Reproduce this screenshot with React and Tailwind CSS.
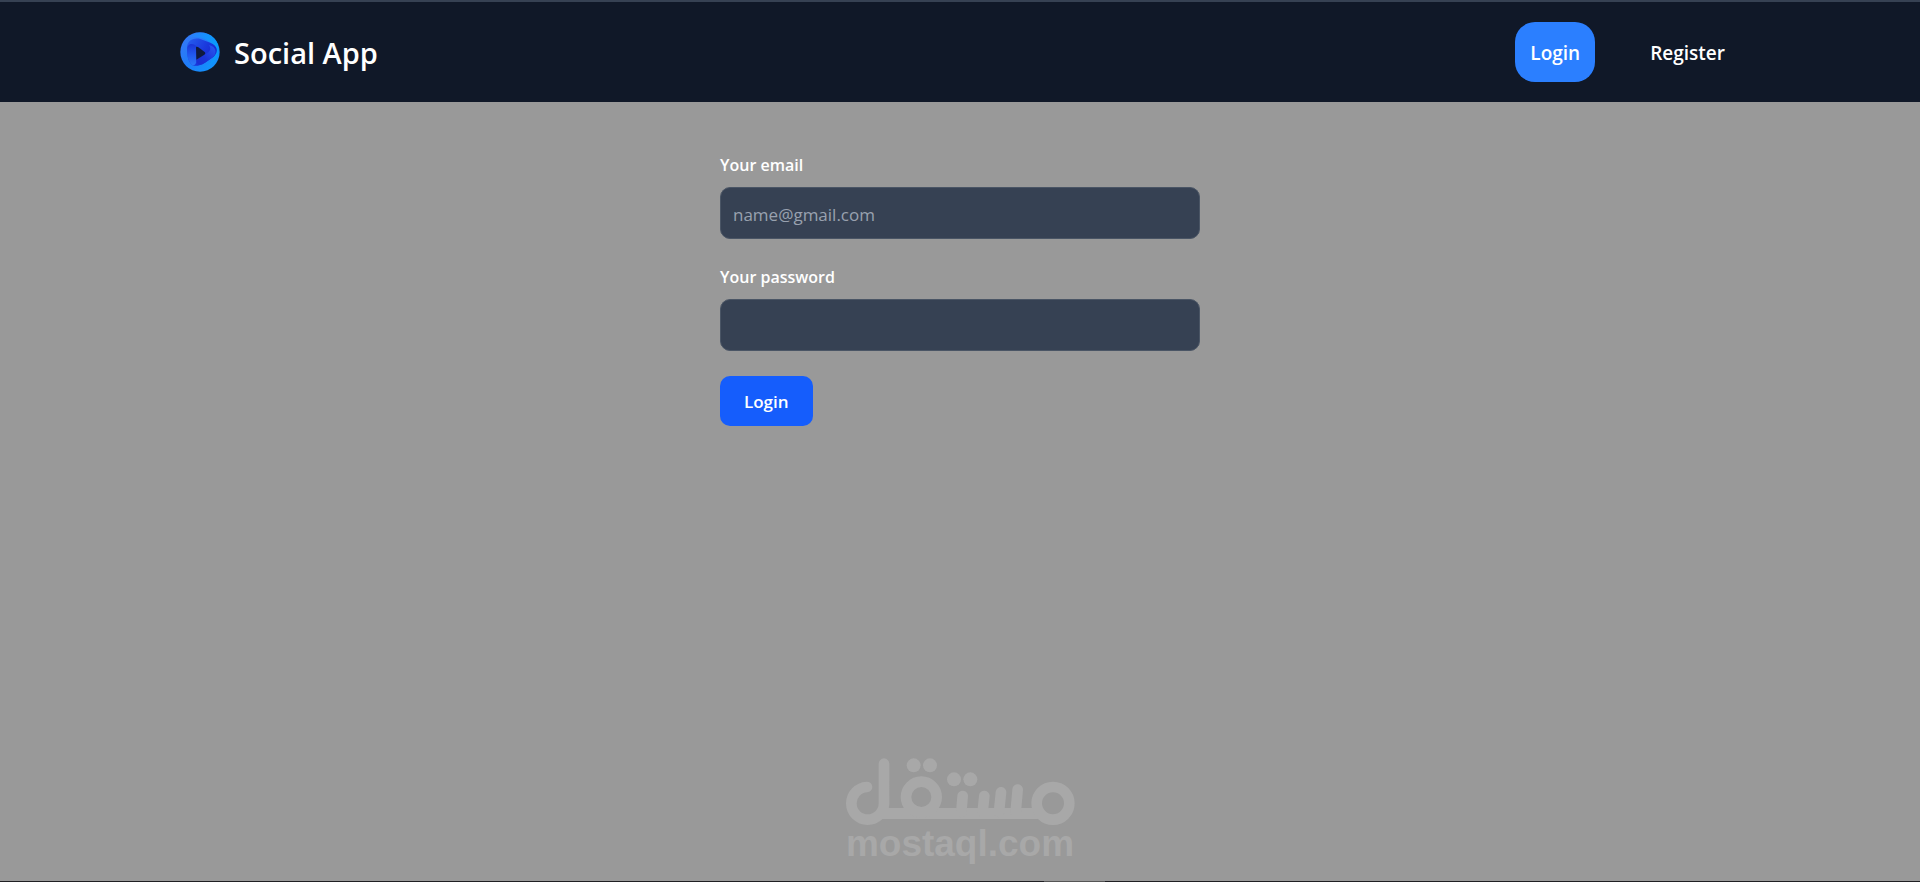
function Logo() {
  return (
    <svg viewBox="13 10 120 120" className="size-10" aria-hidden="true">
      <defs>
        <linearGradient id="ring" x1="0" y1="0" x2="1" y2="1">
          <stop offset="0" stopColor="#3a78f6" />
          <stop offset="0.5" stopColor="#1f7cf8" />
          <stop offset="1" stopColor="#0d9bff" />
        </linearGradient>
        <linearGradient id="rim" x1="0" y1="0" x2="1" y2="0">
          <stop offset="0" stopColor="#2f7cfa" />
          <stop offset="1" stopColor="#069dfb" />
        </linearGradient>
        <linearGradient id="side" x1="0" y1="0" x2="0" y2="1">
          <stop offset="0" stopColor="#1a34d6" />
          <stop offset="0.5" stopColor="#2158ee" />
          <stop offset="1" stopColor="#2a78f8" />
        </linearGradient>
        <linearGradient id="top" x1="0" y1="0" x2="1" y2="0.6">
          <stop offset="0" stopColor="#2660f0" />
          <stop offset="0.6" stopColor="#1a38dc" />
          <stop offset="1" stopColor="#1a26cc" />
        </linearGradient>
        <linearGradient id="low" x1="1" y1="0" x2="0" y2="1">
          <stop offset="0" stopColor="#2a5cf2" />
          <stop offset="0.6" stopColor="#1a34d8" />
          <stop offset="1" stopColor="#1a2cd0" />
        </linearGradient>
      </defs>
      <circle cx="73" cy="70" r="59" fill="url(#ring)" />
      <path d="M34 28C62 2 112 8 126 46C134 76 118 104 92 116C112 96 128 72 112 50C94 28 62 20 34 28Z" fill="url(#rim)" />
      <path d="M34 62C32 36 52 26 74 31L104 42C126 52 130 68 114 84L88 102C70 114 54 112 48 108C38 98 34 84 34 62Z" fill="url(#top)" />
      <path d="M34 62C34 46 50 40 62 52V96C62 108 54 112 48 108C38 98 34 82 34 62Z" fill="url(#side)" />
      <path d="M62 93L96 72C105 66 106 58 100 49L108 52C124 60 122 76 112 85L88 102C72 112 62 108 62 93Z" fill="url(#low)" />
      <path d="M61 56C62 53 67 55 70 57L87 70C90 73 89 76 86 78L62 93Z" fill="#101a3c" />
    </svg>
  );
}

function Watermark() {
  return (
    <div className="flex flex-col items-center text-[#a8a8a8]">
      <svg
        viewBox="60 48 720 216"
        className="h-18 w-60"
        fill="none"
        stroke="currentColor"
        strokeWidth="32"
        strokeLinecap="round"
        role="img"
        aria-label="مستقل"
      >
        <path d="M141 141A49 49 0 1 0 192 191V71" />
        <path d="M180 220.500H665" strokeLinecap="butt" strokeWidth="33" />
        <circle cx="304" cy="171" r="46" />
        <circle cx="699" cy="190" r="49" />
        <path d="M428 168L424 216M493 168L488 216M543 157L537 216M593 149L587 216" />
        <g fill="currentColor" stroke="none">
          <circle cx="281" cy="76" r="21" />
          <circle cx="330" cy="76" r="21" />
          <circle cx="402" cy="118" r="21" />
          <circle cx="451" cy="118" r="21" />
        </g>
      </svg>
      <p className="font-['Liberation_Sans',Arial,sans-serif] text-[37px]/8 font-bold">mostaql.com</p>
    </div>
  );
}

function Field({ id, label, ...props }) {
  return (
    <div className="mb-6">
      <label htmlFor={id} className="mb-2 block text-[16px]/7 font-semibold">
        {label}
      </label>
      <input
        id={id}
        className="block h-13 w-full rounded-[10px] border border-[#4a5565] bg-[#364153] px-3 pt-0.5 text-[17px] placeholder:text-[#99a1af] focus:outline-none"
        {...props}
      />
    </div>
  );
}

export default function App() {
  return (
    <div className="flex min-h-screen flex-col bg-[#999999] font-['Open_Sans','Noto_Sans',sans-serif] text-white">
      <header className="border-t-2 border-[#364153] bg-[#101828]">
        <div className="mx-auto flex w-13/16 items-center justify-between py-5">
          <a href="#" className="flex items-center gap-3.5">
            <Logo />
            <span className="pt-0.5 text-[29px]/10 font-semibold">Social App</span>
          </a>
          <nav className="flex items-center gap-10 text-[19px]/7 font-semibold">
            <a href="#login" className="rounded-[20px] bg-[#2b7fff] px-[15px] pt-[17px] pb-[15px]">
              Login
            </a>
            <a href="#register" className="rounded-[20px] px-[15px] pt-[17px] pb-[15px]">
              Register
            </a>
          </nav>
        </div>
      </header>

      <main className="mx-auto w-1/4 min-w-80 pt-[49px]">
        <form onSubmit={(e) => e.preventDefault()}>
          <Field id="email" label="Your email" type="email" placeholder="name@gmail.com" />
          <Field id="password" label="Your password" type="password" />
          <button type="submit" className="mt-px rounded-[10px] bg-[#155dfc] px-6 pt-3 pb-2.5 text-[17px]/7 font-semibold">
            Login
          </button>
        </form>
      </main>

      <footer className="mt-auto">
        <div className="pb-[21px]">
          <Watermark />
        </div>
        <div className="flex h-px bg-[#1f1f23]">
          <div className="ml-[54.375%] w-[3.2%] bg-[#555555]" />
        </div>
      </footer>
    </div>
  );
}
